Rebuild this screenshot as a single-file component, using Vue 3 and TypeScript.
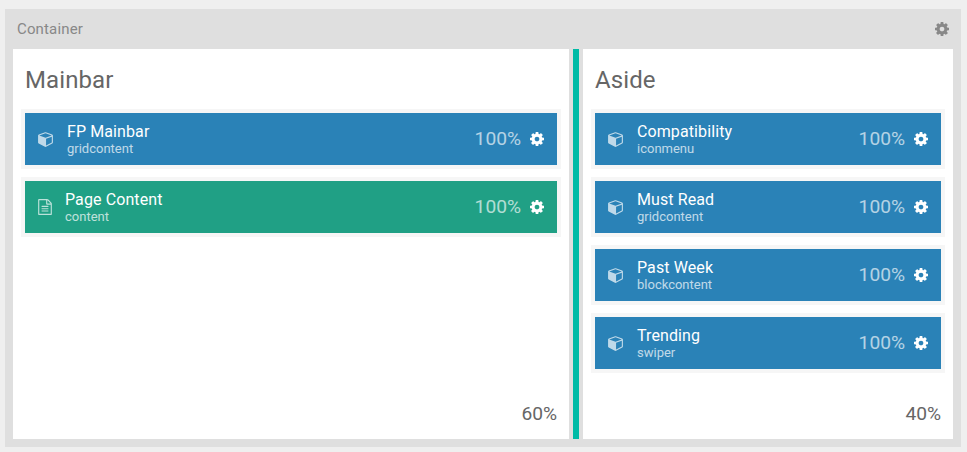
<script setup lang="ts">
interface Particle {
  title: string
  type: string
  size: string
  kind: 'module' | 'content'
}

interface Column {
  id: string
  title: string
  size: string
  items: Particle[]
}

const columns: Column[] = [
  {
    id: 'mainbar',
    title: 'Mainbar',
    size: '60%',
    items: [
      { title: 'FP Mainbar', type: 'gridcontent', size: '100%', kind: 'module' },
      { title: 'Page Content', type: 'content', size: '100%', kind: 'content' },
    ],
  },
  {
    id: 'aside',
    title: 'Aside',
    size: '40%',
    items: [
      { title: 'Compatibility', type: 'iconmenu', size: '100%', kind: 'module' },
      { title: 'Must Read', type: 'gridcontent', size: '100%', kind: 'module' },
      { title: 'Past Week', type: 'blockcontent', size: '100%', kind: 'module' },
      { title: 'Trending', type: 'swiper', size: '100%', kind: 'module' },
    ],
  },
]

const cog =
  'M1024 896q0-106-75-181t-181-75-181 75-75 181 75 181 181 75 181-75 75-181zm512-109v222q0 12-8 23t-20 13l-185 28q-19 54-39 91 35 50 107 138 10 12 10 25t-9 23q-27 37-99 108t-94 71q-12 0-26-9l-138-108q-44 23-91 38-16 136-29 186-7 28-36 28h-222q-14 0-24.5-8.5t-11.5-21.5l-28-184q-49-16-90-37l-141 107q-10 9-25 9-14 0-25-11-126-114-165-168-7-10-7-23 0-12 8-23 15-21 51-66.5t54-70.5q-27-50-41-99l-183-27q-13-2-21-12.5t-8-23.5v-222q0-12 8-23t19-13l186-28q14-46 39-92-40-57-107-138-10-12-10-24 0-10 9-23 26-36 98.5-107.5t94.5-71.5q13 0 26 10l138 107q44-23 91-38 16-136 29-186 7-28 36-28h222q14 0 24.5 8.5t11.5 21.5l28 184q49 16 90 37l142-107q9-9 24-9 13 0 25 10 129 119 165 170 7 8 7 22 0 12-8 23-15 21-51 66.5t-54 70.5q26 50 41 98l183 28q13 2 21 12.5t8 23.5z'
const cube =
  'M896 1629l640-349v-636l-640 233v752zm-64-865l698-254-698-254-698 254zm832-252v768q0 35-18 65t-49 47l-704 384q-28 16-61 16t-61-16l-704-384q-31-17-49-47t-18-65v-768q0-40 23-73t61-47l704-256q22-8 44-8t44 8l704 256q38 14 61 47t23 73z'
const file =
  'M1468 380q28 28 48 76t20 88v1152q0 40-28 68t-68 28h-1344q-40 0-68-28t-28-68v-1600q0-40 28-68t68-28h896q40 0 88 20t76 48zm-444-244v376h376q-10-29-22-41l-313-313q-12-12-41-22zm384 1528v-1024h-416q-40 0-68-28t-28-68v-416h-768v1536h1280zm-1024-864q0-14 9-23t23-9h704q14 0 23 9t9 23v64q0 14-9 23t-23 9h-704q-14 0-23-9t-9-23v-64zm736 224q14 0 23 9t9 23v64q0 14-9 23t-23 9h-704q-14 0-23-9t-9-23v-64q0-14 9-23t23-9h704zm0 256q14 0 23 9t9 23v64q0 14-9 23t-23 9h-704q-14 0-23-9t-9-23v-64q0-14 9-23t23-9h704z'
</script>

<template>
  <main class="page">
    <section class="container">
      <header class="bar">
        <span class="bar-title">Container</span>
        <svg class="cog" viewBox="0 128 1536 1536"><path :d="cog" /></svg>
      </header>
      <div class="columns">
        <template v-for="(column, index) in columns" :key="column.id">
          <div v-if="index > 0" class="handle"></div>
          <section class="column" :class="column.id">
            <h2 class="heading">{{ column.title }}</h2>
            <ul class="items">
              <li v-for="item in column.items" :key="item.title" class="item" :class="item.kind">
                <svg v-if="item.kind === 'module'" class="cube" viewBox="0 0 1664 1792"><path :d="cube" /></svg>
                <svg v-else class="file" viewBox="0 0 1536 1792"><path :d="file" /></svg>
                <div class="label">
                  <span class="title">{{ item.title }}</span>
                  <span class="type">{{ item.type }}</span>
                </div>
                <span class="size">{{ item.size }}</span>
                <svg class="cog" viewBox="0 128 1536 1536"><path :d="cog" /></svg>
              </li>
            </ul>
            <span class="total">{{ column.size }}</span>
          </section>
        </template>
      </div>
    </section>
  </main>
</template>

<style>
body {
  background: #efefef;
}
</style>

<style scoped>
.page {
  box-sizing: border-box;
  height: 452px;
  padding: 9px 6px 5px 5px;
  background: #efefef;
  font-family: Roboto, "Liberation Sans", sans-serif;
  color: #666;
}

.container {
  box-sizing: border-box;
  display: flex;
  flex-direction: column;
  height: 438px;
  padding: 0 8px 8px;
  background: #dfdfdf;
}

.bar {
  display: flex;
  flex: 0 0 40px;
  align-items: center;
  justify-content: space-between;
  padding: 0 4px;
  color: #888;
}

.bar-title {
  font-size: 15px;
  letter-spacing: 0.15px;
  line-height: 20px;
}

svg {
  display: block;
  flex: none;
  fill: currentColor;
}

.cog {
  width: 14px;
  height: 14px;
}

.columns {
  display: flex;
  flex: 1;
}

.handle {
  flex: 0 0 6px;
  margin: 0 4px;
  background: #00bba6;
}

.column {
  box-sizing: border-box;
  display: flex;
  flex-direction: column;
  padding: 13px 8px 11px;
  background: #fff;
}

.mainbar {
  flex: 0 0 556px;
}

.aside {
  flex: 1;
}

.heading {
  margin: 0 4px 11px;
  font-size: 24px;
  font-weight: 400;
  letter-spacing: 0.1px;
  line-height: 36px;
}

.items {
  display: flex;
  flex-direction: column;
  gap: 8px;
  margin: 0;
  padding: 0;
  list-style: none;
}

.item {
  box-sizing: border-box;
  display: flex;
  align-items: center;
  height: 60px;
  padding: 0 13px;
  border: 4px solid #f6f6f6;
  color: #fff;
}

.module {
  background: #2a82b7;
}

.content {
  background: #20a085;
}

.cube {
  width: 15px;
  height: 16px;
  margin-right: 14px;
  opacity: 0.7;
}

.file {
  width: 14px;
  height: 16px;
  margin-right: 13px;
  opacity: 0.7;
}

.label {
  display: flex;
  flex: 1;
  flex-direction: column;
  padding-top: 2px;
}

.title {
  font-size: 16px;
  letter-spacing: 0.1px;
  line-height: 18px;
}

.type {
  font-size: 13px;
  line-height: 16px;
  opacity: 0.7;
}

.size {
  margin-right: 9px;
  font-size: 19.2px;
  line-height: 24px;
  opacity: 0.65;
}

.total {
  align-self: flex-end;
  margin: auto 4px 0 0;
  font-size: 19.2px;
  line-height: 28px;
}
</style>
